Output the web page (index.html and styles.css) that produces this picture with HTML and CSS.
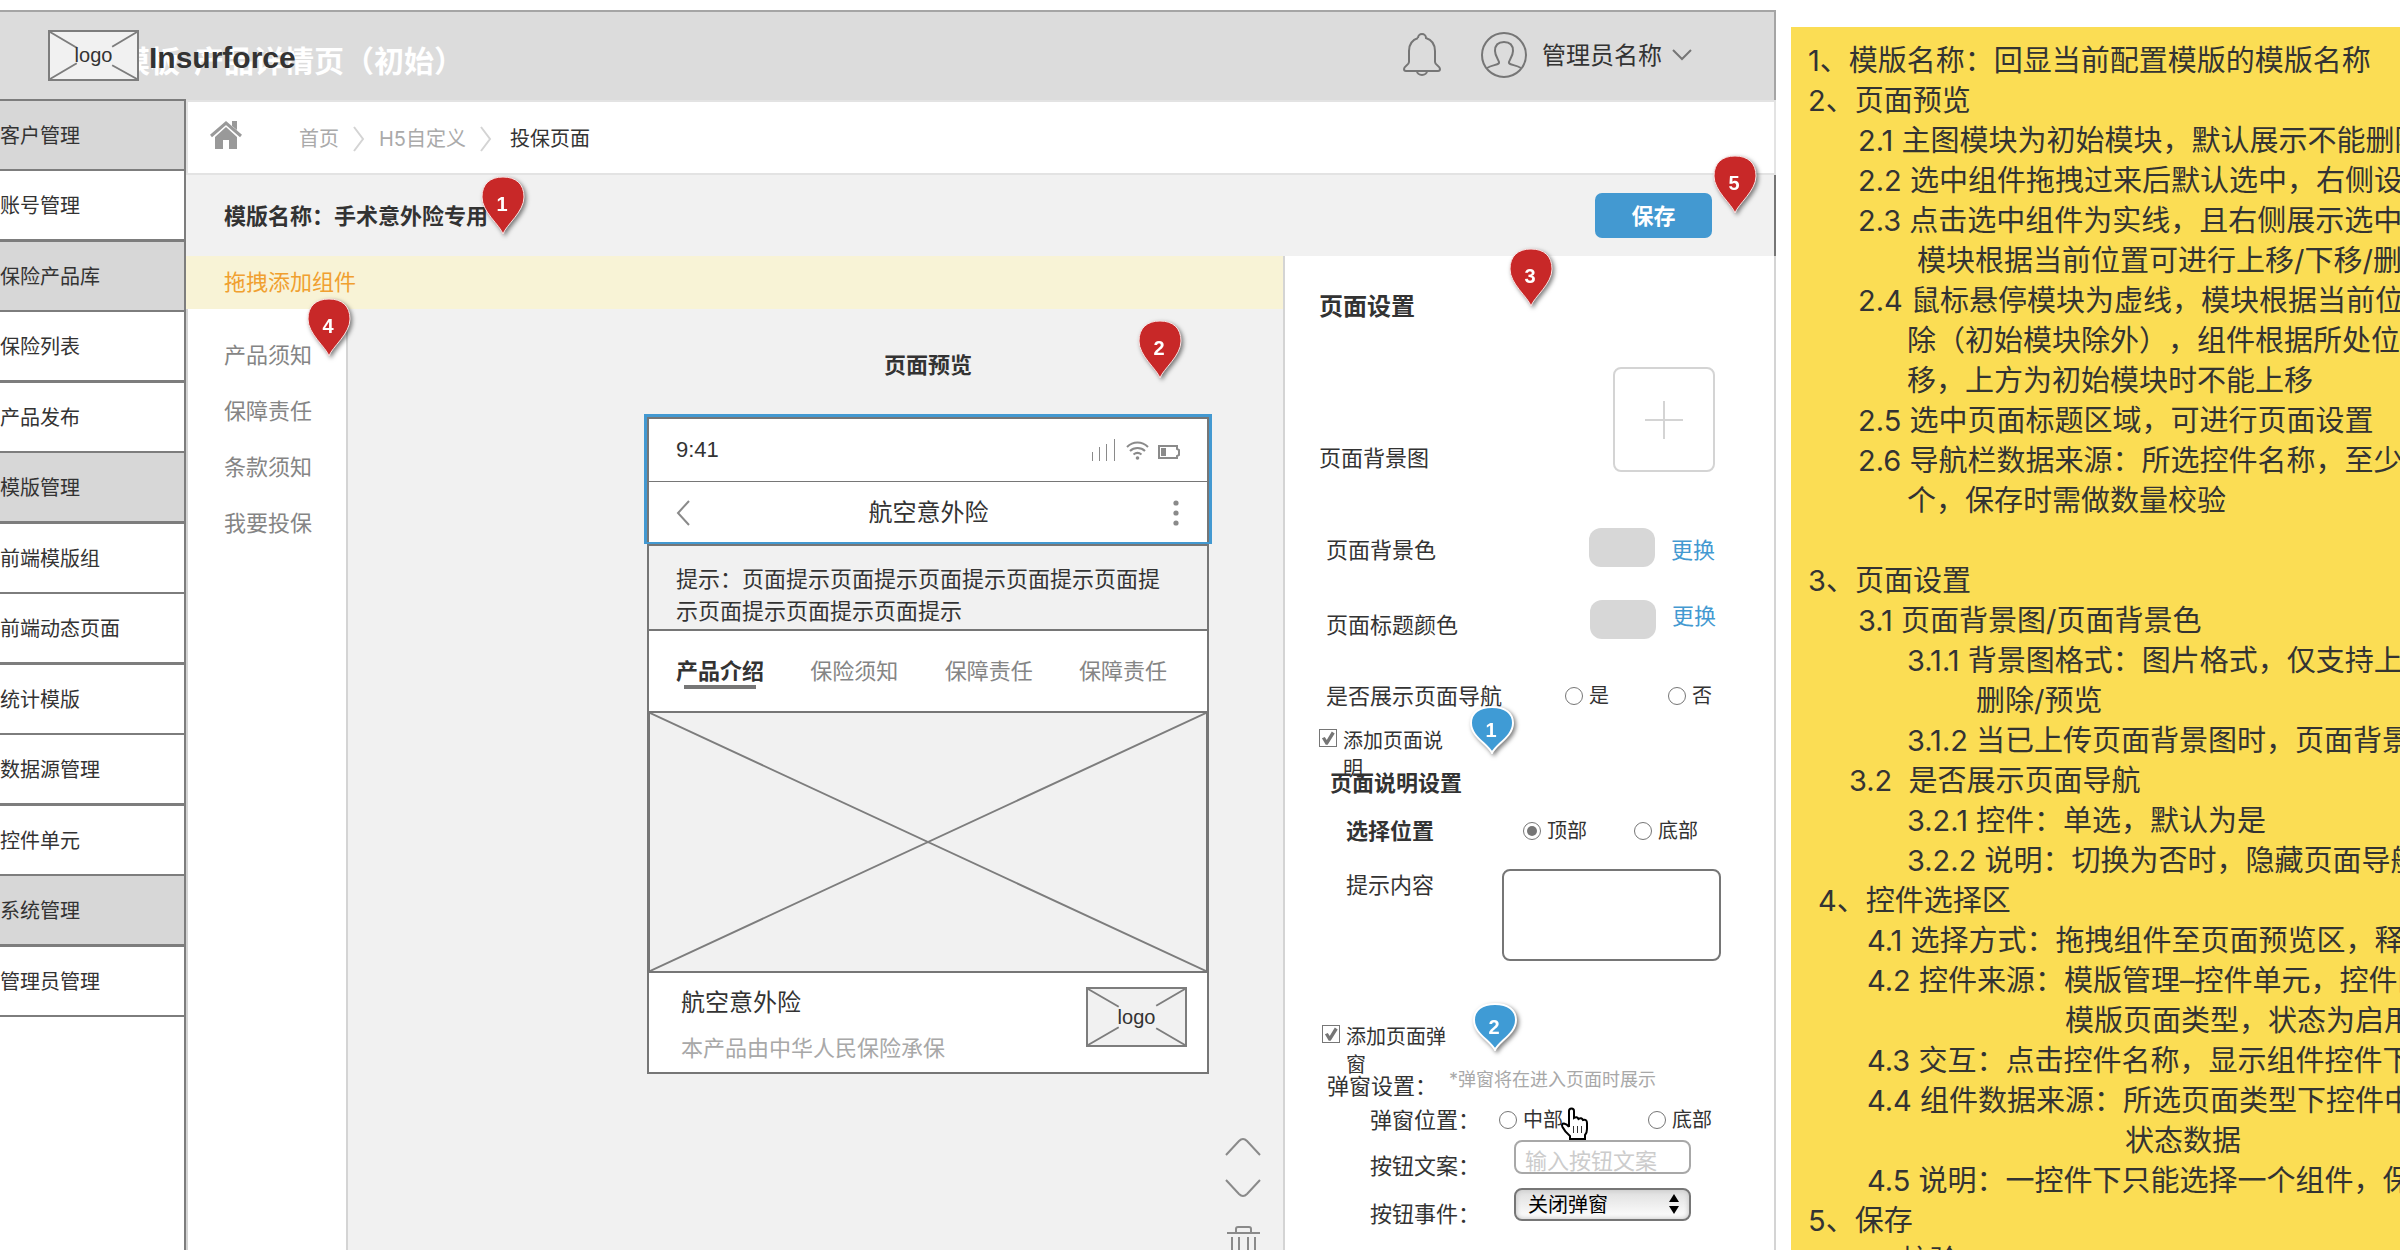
FILE: index.html
```html
<!DOCTYPE html>
<html lang="zh-CN">
<head>
<meta charset="utf-8">
<meta name="viewport" content="width=device-width, initial-scale=1">
<title>Insurforce 模版配置</title>
<link rel="stylesheet" href="styles.css">
</head>
<body>
<svg class="sprite" aria-hidden="true">
  <symbol id="pin-tall" viewBox="0 0 44 60"><path d="M22 58C19 49 1 36 1 21C1 8 9 1 22 1S43 8 43 21C43 36 25 49 22 58Z"/></symbol>
  <symbol id="pin-short" viewBox="0 0 44 48"><path d="M22 47C18 38 1 31 1 17C1 7 9 1 22 1S43 7 43 17C43 31 26 38 22 47Z"/></symbol>
</svg>
<div class="page">
  <div class="app">
    <header class="topbar">
      <span class="topbar-title">模板-产品详情页（初始）</span>
      <span class="logo">
        <svg class="logo-lines" viewBox="0 0 91 51" preserveAspectRatio="none" aria-hidden="true"><path d="M0 0L28 17M91 0L65 16M0 51L28 34M91 51L65 36"/></svg>
        <span class="logo-text">logo</span>
      </span>
      <span class="brand">Insurforce</span>
      <button class="icon-button bell" type="button" aria-label="通知">
        <svg width="38" height="44" viewBox="0 0 38 44"><path d="M15 5a4 4 0 0 1 8 0C29 7 32 12 32 18V29C32 32 37 33 37 36Q37 38 35 38H3Q1 38 1 36C1 33 6 32 6 29V18C6 12 9 7 15 5M14 38a5 4 0 0 0 10 0"/></svg>
      </button>
      <button class="account" type="button">
        <svg width="46" height="46" viewBox="0 0 46 46"><circle cx="23" cy="23" r="22"/><path d="M6 36C11 33 17 33 18 31C19 29 14 25 14 19C14 13 17 10 23 10S32 13 32 19C32 25 27 29 28 31C29 33 35 33 40 36"/></svg>
        <span>管理员名称</span>
        <svg width="20" height="12" viewBox="0 0 20 12"><path d="M1 1L10 10L19 1"/></svg>
      </button>
    </header>

    <div class="body">
      <nav class="sidebar" aria-label="主导航">
        <a class="side-item side-group" href="#">客户管理</a>
        <a class="side-item" href="#">账号管理</a>
        <a class="side-item side-group" href="#">保险产品库</a>
        <a class="side-item" href="#">保险列表</a>
        <a class="side-item" href="#">产品发布</a>
        <a class="side-item side-group" href="#">模版管理</a>
        <a class="side-item" href="#">前端模版组</a>
        <a class="side-item" href="#">前端动态页面</a>
        <a class="side-item" href="#">统计模版</a>
        <a class="side-item" href="#">数据源管理</a>
        <a class="side-item" href="#">控件单元</a>
        <a class="side-item side-group" href="#">系统管理</a>
        <a class="side-item" href="#">管理员管理</a>
      </nav>

      <main class="main">
        <nav class="crumbs" aria-label="面包屑">
          <svg class="home" width="32" height="29" viewBox="0 0 32 29" aria-hidden="true"><path d="M5 16L16 6L27 16V28H19V19H13V28H5Z"/><path class="roof" d="M1 15L16 2L31 15"/><path d="M22 0H27V9L22 5Z"/></svg>
          <a href="#">首页</a>
          <svg class="sep" width="12" height="26" viewBox="0 0 12 26" aria-hidden="true"><path d="M1 1L10 13L1 25"/></svg>
          <a href="#">H5自定义</a>
          <svg class="sep" width="12" height="26" viewBox="0 0 12 26" aria-hidden="true"><path d="M1 1L10 13L1 25"/></svg>
          <span class="crumb-current">投保页面</span>
        </nav>

        <div class="namebar">
          <h1 class="name">模版名称：手术意外险专用</h1>
          <button class="save" type="button">保存</button>
          <svg class="pin red pin-name" width="44" height="60"><use href="#pin-tall"/><text x="21" y="35">1</text></svg>
          <svg class="pin red pin-save" width="44" height="60"><use href="#pin-tall"/><text x="21" y="35">5</text></svg>
        </div>

        <div class="workspace">
          <div class="builder">
            <div class="strip">拖拽添加组件
              <svg class="pin red pin-strip" width="44" height="60"><use href="#pin-tall"/><text x="21" y="35">4</text></svg>
            </div>
            <div class="stage">
              <ul class="components">
                <li>产品须知</li>
                <li>保障责任</li>
                <li>条款须知</li>
                <li>我要投保</li>
              </ul>
              <section class="canvas">
                <h2 class="canvas-title">页面预览
                  <svg class="pin red pin-canvas" width="44" height="60"><use href="#pin-tall"/><text x="21" y="35">2</text></svg>
                </h2>
                <div class="phone">
                  <div class="phone-head">
                    <div class="status">
                      <span>9:41</span>
                      <svg width="90" height="24" viewBox="0 0 90 24" aria-hidden="true"><path class="bars" d="M1.500 14V23M8.500 9V23M15.500 6V23M23.500 1V23"/><path class="wifi" d="M36 9C42 3 51 3 57 9M39 13C43 9 50 9 54 13M42.500 16.500C45 14.500 48 14.500 50.500 16.500"/><circle cx="46.500" cy="20" r="1.800"/><path class="battery" d="M68 8H86V11L88 12V17L86 18V20H68Z"/><path d="M70 10H75V18H70Z"/></svg>
                    </div>
                    <div class="titlebar">
                      <svg width="14" height="26" viewBox="0 0 14 26" aria-hidden="true"><path d="M13 1L2 13L13 25"/></svg>
                      <span>航空意外险</span>
                      <svg class="more" width="6" height="26" viewBox="0 0 6 26" aria-hidden="true"><circle cx="3" cy="3" r="2.600"/><circle cx="3" cy="13" r="2.600"/><circle cx="3" cy="23" r="2.600"/></svg>
                    </div>
                  </div>
                  <div class="phone-body">
                    <p class="tip">提示：页面提示页面提示页面提示页面提示页面提示页面提示页面提示页面提示</p>
                    <div class="tabs">
                      <span class="tab tab-active">产品介绍</span>
                      <span class="tab">保险须知</span>
                      <span class="tab">保障责任</span>
                      <span class="tab">保障责任</span>
                    </div>
                    <svg class="hero" viewBox="0 0 560 260" preserveAspectRatio="none" aria-hidden="true"><path d="M0 0L560 260M560 0L0 260"/></svg>
                    <div class="product">
                      <div>
                        <p class="product-name">航空意外险</p>
                        <p class="product-by">本产品由中华人民保险承保</p>
                      </div>
                      <span class="logo logo-product">
                        <svg class="logo-lines" viewBox="0 0 101 60" preserveAspectRatio="none" aria-hidden="true"><path d="M0 0L32 19M101 0L71 18M0 60L32 41M101 60L71 42"/></svg>
                        <span class="logo-text">logo</span>
                      </span>
                    </div>
                  </div>
                </div>
                <div class="tools">
                  <button class="icon-button" type="button" aria-label="上移"><svg width="36" height="18" viewBox="0 0 36 18"><path d="M1 17L14 3Q18 -1 22 3L35 17"/></svg></button>
                  <button class="icon-button" type="button" aria-label="下移"><svg width="36" height="18" viewBox="0 0 36 18"><path d="M1 1L14 15Q18 19 22 15L35 1"/></svg></button>
                  <button class="icon-button" type="button" aria-label="删除"><svg width="36" height="42" viewBox="0 0 36 42"><path d="M2 8H35M11 8V4Q11 2 13 2H24Q26 2 26 4V8M7 12V37Q7 40 10 40H27Q30 40 30 37V12M14 12V35M23 12V35"/></svg></button>
                </div>
              </section>
            </div>
          </div>

          <form class="settings">
            <h2 class="settings-title">页面设置</h2>
            <div class="row row-upload">
              <span class="label">页面背景图</span>
              <button class="upload" type="button" aria-label="上传页面背景图"><svg width="38" height="38" viewBox="0 0 38 38"><path d="M19 0V38M0 19H38"/></svg></button>
            </div>
            <div class="row row-bg indent-s">
              <span class="label">页面背景色</span>
              <span class="swatch"></span>
              <a class="change" href="#">更换</a>
            </div>
            <div class="row row-color indent-s">
              <span class="label">页面标题颜色</span>
              <span class="swatch"></span>
              <a class="change" href="#">更换</a>
            </div>
            <div class="row row-nav indent-s">
              <span class="label">是否展示页面导航</span>
              <label class="option"><input type="radio" name="nav">是</label>
              <label class="option"><input type="radio" name="nav">否</label>
            </div>
            <label class="check"><input type="checkbox" checked><span>添加页面说明</span></label>
            <h3 class="sub sub-note">页面说明设置</h3>
            <div class="row row-place indent-m">
              <span class="label strong">选择位置</span>
              <label class="option"><input type="radio" name="place" checked>顶部</label>
              <label class="option"><input type="radio" name="place">底部</label>
            </div>
            <div class="row row-content indent-m">
              <label class="label" for="content">提示内容</label>
              <textarea id="content" class="content"></textarea>
            </div>
            <label class="check check-popup"><input type="checkbox" checked><span>添加页面弹窗</span></label>
            <div class="row row-popup">
              <span class="label">弹窗设置：</span>
              <span class="hint">*弹窗将在进入页面时展示</span>
            </div>
            <div class="row row-position indent-l">
              <span class="label">弹窗位置：</span>
              <label class="option"><input type="radio" name="popup">中部</label>
              <label class="option"><input type="radio" name="popup">底部</label>
              <svg class="hand" width="29" height="34" viewBox="0 0 29 34" aria-hidden="true"><path class="hand-shape" d="M9 20V4Q9 1.500 11.500 1.500T14 4V11Q17 9 18.500 12Q21.500 10 23 13Q27 12 27 16V22Q27 26 25 28V32H10V29Q5 25 2.500 20Q1 16.500 4 16.500Q7 17 9 20"/><path class="hand-lines" d="M13.500 19V26M17.500 19V26M21.500 19V26"/></svg>
            </div>
            <div class="row row-field indent-l">
              <label class="label" for="btn-text">按钮文案：</label>
              <input id="btn-text" class="text" type="text" placeholder="输入按钮文案">
            </div>
            <div class="row row-field row-event indent-l">
              <label class="label" for="btn-event">按钮事件：</label>
              <span class="select-box">
                <select id="btn-event" class="select"><option>关闭弹窗</option></select>
                <svg class="select-arrows" width="10" height="20" viewBox="0 0 10 20" aria-hidden="true"><path d="M5 0L10 8H0ZM5 20L0 12H10Z"/></svg>
              </span>
            </div>
            <svg class="pin red pin-settings" width="44" height="60"><use href="#pin-tall"/><text x="21" y="35">3</text></svg>
            <svg class="pin blue pin-note" width="44" height="48"><use href="#pin-short"/><text x="21" y="31">1</text></svg>
            <svg class="pin blue pin-popup" width="44" height="48"><use href="#pin-short"/><text x="21" y="31">2</text></svg>
          </form>
        </div>
      </main>
    </div>
  </div>

  <aside class="notes">
    <p>1、模版名称：回显当前配置模版的模版名称</p>
    <p>2、页面预览</p>
    <p class="in-2">2.1 主图模块为初始模块，默认展示不能删除</p>
    <p class="in-2">2.2 选中组件拖拽过来后默认选中，右侧设置</p>
    <p class="in-2">2.3 点击选中组件为实线，且右侧展示选中模</p>
    <p class="in-4">模块根据当前位置可进行上移/下移/删除</p>
    <p class="in-2">2.4 鼠标悬停模块为虚线，模块根据当前位置</p>
    <p class="in-3">除（初始模块除外），组件根据所处位置</p>
    <p class="in-3">移，上方为初始模块时不能上移</p>
    <p class="in-2">2.5 选中页面标题区域，可进行页面设置</p>
    <p class="in-2">2.6 导航栏数据来源：所选控件名称，至少选</p>
    <p class="in-3">个，保存时需做数量校验</p>
    <p class="blank"></p>
    <p>3、页面设置</p>
    <p class="in-2">3.1 页面背景图/页面背景色</p>
    <p class="in-3">3.1.1 背景图格式：图片格式，仅支持上传</p>
    <p class="in-5">删除/预览</p>
    <p class="in-3">3.1.2 当已上传页面背景图时，页面背景</p>
    <p class="in-1">3.2&nbsp; 是否展示页面导航</p>
    <p class="in-3">3.2.1 控件：单选，默认为是</p>
    <p class="in-3">3.2.2 说明：切换为否时，隐藏页面导航</p>
    <p class="in-0">4、控件选择区</p>
    <p class="in-2b">4.1 选择方式：拖拽组件至页面预览区，释放</p>
    <p class="in-2b">4.2 控件来源：模版管理–控件单元，控件的</p>
    <p class="in-6">模版页面类型，状态为启用</p>
    <p class="in-2b">4.3 交互：点击控件名称，显示组件控件下</p>
    <p class="in-2b">4.4 组件数据来源：所选页面类型下控件中</p>
    <p class="in-7">状态数据</p>
    <p class="in-2b">4.5 说明：一控件下只能选择一个组件，保存</p>
    <p>5、保存</p>
    <p class="in-2">5.1 校验</p>
  </aside>
</div>
</body>
</html>
```
FILE: styles.css
```css
* { box-sizing: border-box; }

body {
  margin: 0;
  font-family: "Inter", "Noto Sans CJK SC", sans-serif;
  font-size: 22px;
  line-height: 28px;
  text-spacing-trim: space-all;
  color: #333;
  background: #fff;
}

h1, h2, h3, p, ul { margin: 0; padding: 0; font-size: inherit; }
a { color: inherit; text-decoration: none; }
button, input, select, textarea { font: inherit; color: inherit; margin: 0; }
button { border: 0; padding: 0; background: none; }
svg { display: block; flex: none; fill: none; }
.sprite { position: absolute; width: 0; height: 0; }

.page { display: flex; gap: 15px; height: 100vh; overflow: hidden; }
.app { flex: 1; min-width: 0; display: flex; flex-direction: column; padding-top: 10px; }

/* Top bar */
.topbar {
  position: relative;
  display: flex;
  align-items: center;
  height: 90px;
  padding: 0 82px 2px 48px;
  background: #dcdcdc;
  border-top: 2px solid #a5a5a5;
  border-right: 2px solid #a5a5a5;
}
.topbar-title {
  position: absolute;
  left: 120px;
  top: 29px;
  font-size: 30px;
  line-height: 40px;
  font-weight: 700;
  color: #fff;
  white-space: nowrap;
}
.logo {
  position: relative;
  display: grid;
  place-items: center;
  width: 91px;
  height: 51px;
  background: #f1f1f1;
  border: 2px solid #7d7d7d;
}
.logo-lines { position: absolute; inset: 0; width: 100%; height: 100%; stroke: #7d7d7d; stroke-width: 2; }
.logo-text { position: relative; font-family: "Liberation Sans", sans-serif; font-size: 20px; }
.brand {
  position: relative;
  margin: 6px auto 0 10px;
  font-family: "Liberation Sans", sans-serif;
  font-size: 30px;
  font-weight: 700;
}
.bell { margin-right: 40px; stroke: #767676; stroke-width: 2; }
.account { display: flex; align-items: center; gap: 10px; font-size: 24px; stroke: #767676; stroke-width: 2; }
.account span { margin: 2px 0 0 5px; stroke: none; }

/* Sidebar */
.body { flex: 1; min-height: 0; display: flex; }
.sidebar { width: 186px; margin-top: -1px; border-top: 2px solid #7d7d7d; border-right: 2px solid #7d7d7d; z-index: 1; }
.side-item {
  display: block;
  padding-top: 2px;
  font-size: 20px;
  line-height: 66px;
  border-bottom: 2px solid #7d7d7d;
}
.side-item:nth-child(even) { border-bottom-width: 3px; }
.side-group { background: #d7d7d7; }

/* Main column */
.main { flex: 1; min-width: 0; display: flex; flex-direction: column; }
.crumbs {
  display: flex;
  align-items: center;
  height: 75px;
  padding: 2px 0 0 22px;
  border: 2px solid #e3e3e3;
  font-size: 20px;
  color: #aaa;
}
.home { margin: 0 57px 6px 0; fill: #999; }
.home .roof { fill: none; stroke: #999; stroke-width: 3; }
.sep { margin: 0 14px; stroke: #d4d4d4; stroke-width: 2; }
.crumb-current { margin-left: 4px; color: #333; }

.namebar {
  position: relative;
  display: flex;
  align-items: center;
  justify-content: space-between;
  height: 81px;
  padding: 0 62px 0 38px;
  background: #f1f1f1;
  border-right: 2px solid #767676;
}
.save { width: 117px; height: 45px; border-radius: 7px; background: #4399d1; color: #fff; font-weight: 700; }

.workspace { flex: 1; min-height: 0; display: flex; }
.builder { flex: 1; min-width: 0; display: flex; flex-direction: column; }
.strip { position: relative; padding-left: 38px; line-height: 53px; background: #f8f3d6; color: #f0a030; }
.stage { flex: 1; min-height: 0; display: flex; }
.components {
  width: 162px;
  padding: 18px 0 0 36px;
  border: solid #d4d4d4;
  border-width: 0 2px;
  list-style: none;
  line-height: 56px;
  color: #858585;
}

/* Preview canvas */
.canvas {
  flex: 1;
  display: grid;
  grid-template-columns: 1fr 568px 71px;
  align-content: start;
  padding-top: 40px;
  background: #f1f1f1;
}
.canvas-title { position: relative; grid-column: 2; line-height: 32px; text-align: center; }
.phone { grid-column: 2; margin-top: 33px; }
.phone-head { border: 3px solid #4399d1; border-bottom-width: 2px; background: #fff; }
.status, .titlebar { align-items: center; border: 2px solid #767676; padding: 0 26px 0 27px; }
.status {
  display: flex;
  justify-content: space-between;
  height: 65px;
  border-bottom-width: 1px;
  font-family: "Liberation Sans", sans-serif;
}
.status svg { fill: #8a8a8a; stroke: none; }
.status .bars, .status .wifi, .status .battery { fill: none; stroke: #8a8a8a; }
.status .bars { stroke-width: 1; }
.status .wifi, .status .battery { stroke-width: 2; }
.titlebar {
  display: grid;
  grid-template-columns: 1fr auto 1fr;
  height: 60px;
  padding-top: 2px;
  border-width: 0 2px;
  font-size: 24px;
  stroke: #8a8a8a;
  stroke-width: 2;
}
.titlebar span { stroke: none; }
.titlebar .more { justify-self: end; margin-right: 2px; fill: #8a8a8a; stroke: none; }
.phone-body { margin: 0 3px; border: 2px solid #767676; background: #fff; }
.tip { padding: 17px 44px 2px 27px; line-height: 32px; background: #f1f1f1; border-bottom: 2px solid #767676; word-break: break-all; }
.tabs { display: flex; justify-content: space-between; align-items: center; height: 80px; padding: 0 40px 0 27px; color: #858585; }
.tab-active { position: relative; color: #333; font-weight: 700; }
.tab-active::after { content: ""; position: absolute; left: 8px; right: 8px; bottom: -4px; height: 4px; background: #767676; }
.hero { width: 100%; height: 262px; background: #f1f1f1; border: solid #767676; border-width: 2px 1px; stroke: #7d7d7d; stroke-width: 2; }
.product { display: flex; justify-content: space-between; height: 99px; padding: 14px 20px 0 32px; }
.product-name { font-size: 24px; line-height: 32px; }
.product-by { margin-top: 13px; line-height: 32px; color: #a8a8a8; }
.logo-product { width: 101px; height: 60px; }
.tools {
  grid-column: 3;
  grid-row: 3;
  display: flex;
  flex-direction: column;
  align-items: flex-start;
  gap: 23px;
  margin-top: 64px;
  padding-left: 13px;
  stroke: #8a8a8a;
  stroke-width: 2;
}
.tools .icon-button:last-child { margin-top: 5px; }

/* Settings panel */
.settings {
  position: relative;
  width: 493px;
  padding: 35px 53px 0 34px;
  border: solid #d4d4d4;
  border-width: 0 2px;
}
.settings-title { font-size: 24px; line-height: 32px; }
.row { display: flex; align-items: center; }
.label { margin-right: auto; }
.strong { font-weight: 700; }
.indent-s { padding-left: 7px; }
.indent-m { padding-left: 27px; }
.indent-l { padding-left: 51px; }

.row-upload { margin-top: 44px; align-items: flex-end; padding-right: 6px; }
.upload { display: grid; place-items: center; width: 102px; height: 105px; border: 2px solid #d4d4d4; border-radius: 8px; stroke: #d4d4d4; stroke-width: 2; }
.row-bg { margin-top: 56px; height: 44px; padding-right: 6px; }
.row-color { margin-top: 28px; height: 50px; padding-right: 5px; }
.swatch { align-self: flex-start; width: 66px; height: 39px; margin-right: 16px; border-radius: 12px; background: #d7d7d7; }
.change { color: #4399d1; }
.row-color .change { align-self: flex-start; line-height: 32px; }

.option { display: flex; align-items: center; gap: 6px; font-size: 20px; }
.row-nav { margin-top: 30px; height: 32px; padding-right: 9px; }
.row-nav .option + .option { margin-left: 59px; }
.row-place { margin-top: 20px; padding-right: 23px; }
.row-place .option + .option { margin-left: 47px; }
input[type="radio"], input[type="checkbox"] { appearance: none; flex: none; width: 18px; height: 18px; background: #fff; border: 1px solid #767676; }
input[type="radio"] { border-radius: 50%; display: grid; place-items: center; }
input[type="radio"]:checked::before { content: ""; width: 10px; height: 10px; border-radius: 50%; background: #767676; }
input[type="checkbox"]:checked::before {
  content: "";
  display: block;
  height: 100%;
  background: #767676;
  clip-path: polygon(12% 52%, 30% 44%, 42% 62%, 74% 10%, 92% 22%, 48% 92%, 36% 92%);
}

.check { display: flex; align-items: flex-start; gap: 6px; width: 127px; margin-top: 15px; font-size: 20px; }
.check input { margin-top: 2px; }
.check span { flex: 1; }
.sub-note { margin-top: -14px; padding-left: 11px; }
.row-content { margin-top: 24px; align-items: flex-start; line-height: 32px; }
.content { display: block; width: 219px; height: 92px; border: 2px solid #767676; border-radius: 8px; resize: none; background: #fff; }
.check-popup { margin: 62px 0 0 3px; }
.row-popup { margin-top: -7px; padding-left: 8px; align-items: flex-start; }
.hint { margin-right: 65px; font-size: 18px; line-height: 16px; color: #a8a8a8; }
.row-position { position: relative; margin-top: 6px; padding-right: 9px; }
.row-position .option + .option { margin-left: 85px; }
.hand { position: absolute; right: 132px; top: 1px; }
.hand-shape { fill: #fff; stroke: #000; stroke-width: 2; }
.hand-lines { stroke: #333; stroke-width: 1; }
.row-field { margin-top: 6px; height: 40px; align-items: flex-start; padding-right: 30px; }
.row-field .label { align-self: flex-end; }
.text { width: 177px; height: 34px; padding: 8px 9px 0; border: 2px solid #a8a8a8; border-radius: 8px; background: #fff; }
.text::placeholder { color: #ccc; opacity: 1; }
.row-event { margin-top: 8px; }
.select-box { position: relative; display: block; }
.select {
  appearance: none;
  display: block;
  width: 177px;
  height: 33px;
  padding: 0 12px;
  font-size: 20px;
  line-height: 28px;
  color: #000;
  border: 2px solid #767676;
  border-radius: 8px;
  background: linear-gradient(#dedede, #fff);
  box-shadow: inset 0 0 4px 1px #ccc;
}
.select-arrows { position: absolute; right: 12px; top: 6px; fill: #000; pointer-events: none; }

/* Annotation pins */
.pin { position: absolute; z-index: 2; overflow: visible; stroke: #fbe3e3; stroke-width: 1; filter: drop-shadow(2px 2px 2px rgba(0, 0, 0, .5)); }
.pin text { fill: #fff; stroke: none; font: 700 20px "Liberation Sans", sans-serif; text-anchor: middle; }
.red { fill: #c82828; }
.blue { fill: #3f9bd5; stroke: #fff; stroke-width: 2; }
.pin-name { left: 295px; top: 1px; }
.pin-save { right: 17px; top: -20px; }
.pin-strip { left: 121px; top: 42px; }
.pin-canvas { right: 30px; top: -29px; }
.pin-settings { right: 221px; top: -8px; }
.pin-note { right: 260px; top: 450px; }
.pin-popup { right: 257px; top: 747px; }

/* Notes */
.notes { width: 609px; margin-top: 27px; padding: 14px 0 0 17px; background: #fbdd54; font-size: 29px; line-height: 40px; white-space: nowrap; overflow: hidden; }
.blank { height: 40px; }
.in-0 { padding-left: 10px; }
.in-1 { padding-left: 41px; }
.in-2 { padding-left: 50px; }
.in-2b { padding-left: 59px; }
.in-3 { padding-left: 99px; }
.in-4 { padding-left: 109px; }
.in-5 { padding-left: 168px; }
.in-6 { padding-left: 257px; }
.in-7 { padding-left: 317px; }
```
